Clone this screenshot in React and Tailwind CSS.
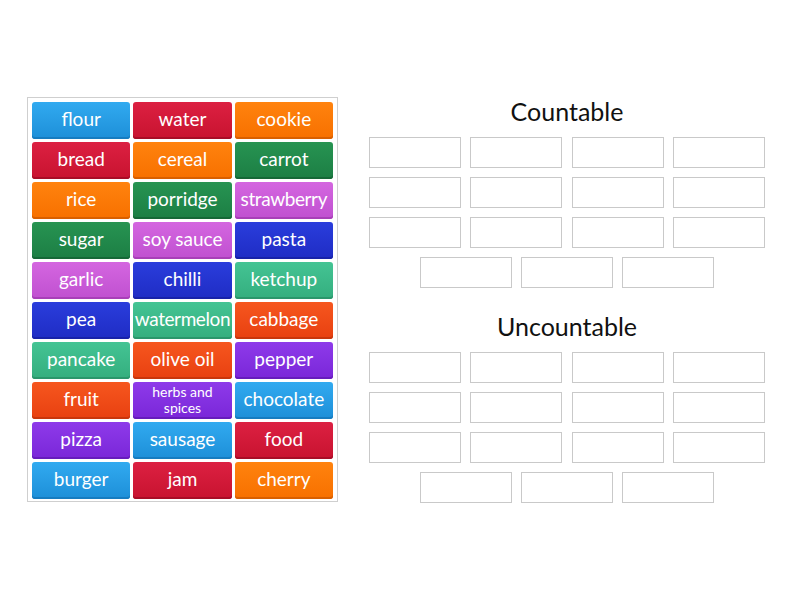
import React from 'react';

const colors = {
  blue: 'bg-gradient-to-b from-[#31aaf0] to-[#1d8fd8] shadow-[inset_0_-2px_0_#167cc0]',
  red: 'bg-gradient-to-b from-[#dc2042] to-[#c8122f] shadow-[inset_0_-2px_0_#a80c26]',
  orange: 'bg-gradient-to-b from-[#ff830e] to-[#f77000] shadow-[inset_0_-2px_0_#d85f00]',
  green: 'bg-gradient-to-b from-[#279452] to-[#1c7e44] shadow-[inset_0_-2px_0_#156837]',
  pink: 'bg-gradient-to-b from-[#d466e0] to-[#c050d0] shadow-[inset_0_-2px_0_#a83fb8]',
  navy: 'bg-gradient-to-b from-[#2a3ddc] to-[#1f2cc4] shadow-[inset_0_-2px_0_#1822a8]',
  teal: 'bg-gradient-to-b from-[#44c494] to-[#34ae7e] shadow-[inset_0_-2px_0_#2a966b]',
  vermilion: 'bg-gradient-to-b from-[#f6561e] to-[#e84010] shadow-[inset_0_-2px_0_#c8360c]',
  purple: 'bg-gradient-to-b from-[#8e3aea] to-[#7a26d8] shadow-[inset_0_-2px_0_#661cbc]',
};

const tiles = [
  ['flour', 'blue'], ['water', 'red'], ['cookie', 'orange'],
  ['bread', 'red'], ['cereal', 'orange'], ['carrot', 'green'],
  ['rice', 'orange'], ['porridge', 'green'], ['strawberry', 'pink'],
  ['sugar', 'green'], ['soy sauce', 'pink'], ['pasta', 'navy'],
  ['garlic', 'pink'], ['chilli', 'navy'], ['ketchup', 'teal'],
  ['pea', 'navy'], ['watermelon', 'teal'], ['cabbage', 'vermilion'],
  ['pancake', 'teal'], ['olive oil', 'vermilion'], ['pepper', 'purple'],
  ['fruit', 'vermilion'], ['herbs and spices', 'purple'], ['chocolate', 'blue'],
  ['pizza', 'purple'], ['sausage', 'blue'], ['food', 'red'],
  ['burger', 'blue'], ['jam', 'red'], ['cherry', 'orange'],
];

const Tile = ({ word, color }) => {
  const small = word === 'herbs and spices';
  const long = word === 'watermelon' || word === 'strawberry';
  return (
    <div
      className={`h-[37px] rounded-[3px] flex items-center justify-center text-white text-center ${colors[color]} ${
        small
          ? 'text-[14px] leading-[16px] pb-[2px]'
          : `text-[19px] leading-none pb-[4px] ${long ? 'tracking-[-0.4px]' : ''}`
      }`}
    >
      {small ? (
        <span>herbs and<br />spices</span>
      ) : (
        word
      )}
    </div>
  );
};

const Slot = () => <div className="w-[92px] h-[31px] border border-[#c9c9c9] bg-white" />;

const Group = ({ title }) => (
  <div className="flex flex-col items-center">
    <h2 className="h-[28px] text-[25px] leading-[28px] text-[#111]">{title}</h2>
    <div className="mt-[12px] flex flex-col gap-[9px]">
      {[0, 1, 2].map((r) => (
        <div key={r} className="flex gap-[9.33px]">
          <Slot /><Slot /><Slot /><Slot />
        </div>
      ))}
      <div className="flex gap-[9.33px] justify-center">
        <Slot /><Slot /><Slot />
      </div>
    </div>
  </div>
);

export default function App() {
  return (
    <div className="w-[800px] h-[600px] bg-white flex font-['Lato','Noto_Sans',sans-serif]">
      <div className="ml-[27px] mt-[97px] w-[311px] h-[405px] border border-[#cfcfcf] p-[4px] grid grid-cols-3 gap-x-[3px] gap-y-[3px] content-start">
        {tiles.map(([w, c]) => (
          <Tile key={w} word={w} color={c} />
        ))}
      </div>
      <div className="ml-[31px] mt-[97px] w-[396px] flex flex-col gap-[24px]">
        <Group title="Countable" />
        <Group title="Uncountable" />
      </div>
    </div>
  );
}
